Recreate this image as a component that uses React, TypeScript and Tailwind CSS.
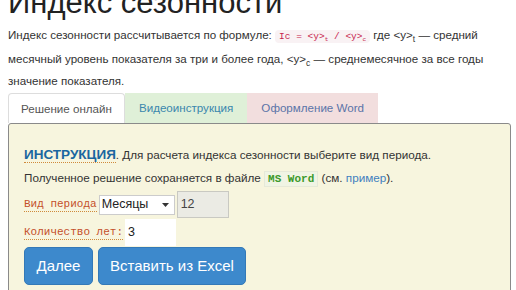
import React from 'react'

export default function App() {
  return (
    <div className="w-[516px] h-[290px] overflow-hidden bg-white" style={{ fontFamily: '"Liberation Sans", Arial, sans-serif' }}>
      <div className="px-2 -mt-[14px]">
        {/* Title */}
        <h1 className="text-[31px] leading-[34px] text-[#222]">Индекс сезонности</h1>

        {/* Description */}
        <p className="mt-[4px] text-[11.6px] leading-[22px] text-[#333]">
          Индекс сезонности рассчитывается по формуле:{' '}
          <code className="px-1 py-[1px] rounded bg-[#f9f2f4] text-[#c7254e] text-[9.5px] font-['Liberation_Mono',monospace]">
            Ic = &lt;y&gt;<span className="relative top-[2px] text-[6px] leading-none">t</span> / &lt;y&gt;
            <span className="relative top-[2px] text-[6px] leading-none">c</span>
          </code>{' '}
          где &lt;y&gt;<span className="relative top-[3px] text-[8.5px] leading-none">t</span> — средний месячный уровень
          показателя за три и более года, &lt;y&gt;<span className="relative top-[3px] text-[8.5px] leading-none">c</span> —
          среднемесячное за все годы значение показателя.
        </p>

        {/* Tabs */}
        <div className="mt-[1px] flex text-[11.6px]">
          <div className="h-[30px] px-[12px] flex items-center bg-white border border-[#ddd] border-b-0 rounded-t text-[#555]">
            Решение онлайн
          </div>
          <div className="h-[30px] px-[14px] flex items-center bg-[#dff0d8] text-[#3a87ad]">Видеоинструкция</div>
          <div className="h-[30px] px-[14px] flex items-center bg-[#f2dede] text-[#5b74a8]">Оформление Word</div>
        </div>

        {/* Panel */}
        <div className="w-[503px] h-[200px] bg-[#f7f5de] border border-[#8a8a8a] rounded-t-[3px] px-[15px] pt-[20px] text-[11.7px] text-[#333]">
          <div className="leading-[22px]">
            <span className="font-bold text-[13.5px] text-[#1a66a0] border-b border-dotted border-[#d08a3a]">ИНСТРУКЦИЯ</span>. Для расчета индекса
            сезонности выберите вид периода.
          </div>
          <div className="leading-[22px] mt-[1px]">
            Полученное решение сохраняется в файле{' '}
            <code className="px-[3px] py-[1px] bg-[#f0f4e4] border border-[#e6e9d8] text-[#3c9a2c] font-bold text-[11px] font-['Liberation_Mono',monospace]">
              MS Word
            </code>{' '}
            (см. <span className="text-[#3f7fbf]">пример</span>).
          </div>

          {/* Period row */}
          <div className="mt-[1px] flex items-center">
            <span className="text-[11px] text-[#c4502a] border-b border-dotted border-[#d08a3a] font-['Liberation_Mono',monospace] leading-[13px]">
              Вид периода
            </span>
            <div className="ml-[2px] w-[76px] h-[20px] bg-white border border-[#ccc] flex items-center justify-between px-[2px] text-[12.5px] text-[#222]">
              <span>Месяцы</span>
              <svg width="7" height="4" viewBox="0 0 7 4" className="mr-[3px]">
                <path d="M0 0h7L3.5 4z" fill="#333" />
              </svg>
            </div>
            <div className="ml-[2px] w-[52px] h-[27px] bg-[#ebebe4] border border-[#c9c9c2] flex items-center px-[3px] text-[12.5px] text-[#444]">
              12
            </div>
          </div>

          {/* Years row */}
          <div className="mt-[1px] flex items-center">
            <span className="text-[11px] text-[#c4502a] border-b border-dotted border-[#d08a3a] font-['Liberation_Mono',monospace] leading-[13px]">
              Количество лет:
            </span>
            <div className="ml-[2px] w-[51px] h-[27px] bg-white flex items-center px-[3px] text-[12.5px] text-[#222]">
              3
            </div>
          </div>

          {/* Buttons */}
          <div className="mt-[1px] flex gap-[5px]">
            <button className="w-[69px] h-[38px] rounded-[5px] bg-[#3d89cc] border border-[#3479b7] text-white text-[15px]">
              Далее
            </button>
            <button className="w-[148px] h-[38px] rounded-[5px] bg-[#3d89cc] border border-[#3479b7] text-white text-[15px]">
              Вставить из Excel
            </button>
          </div>
        </div>
      </div>
    </div>
  )
}
